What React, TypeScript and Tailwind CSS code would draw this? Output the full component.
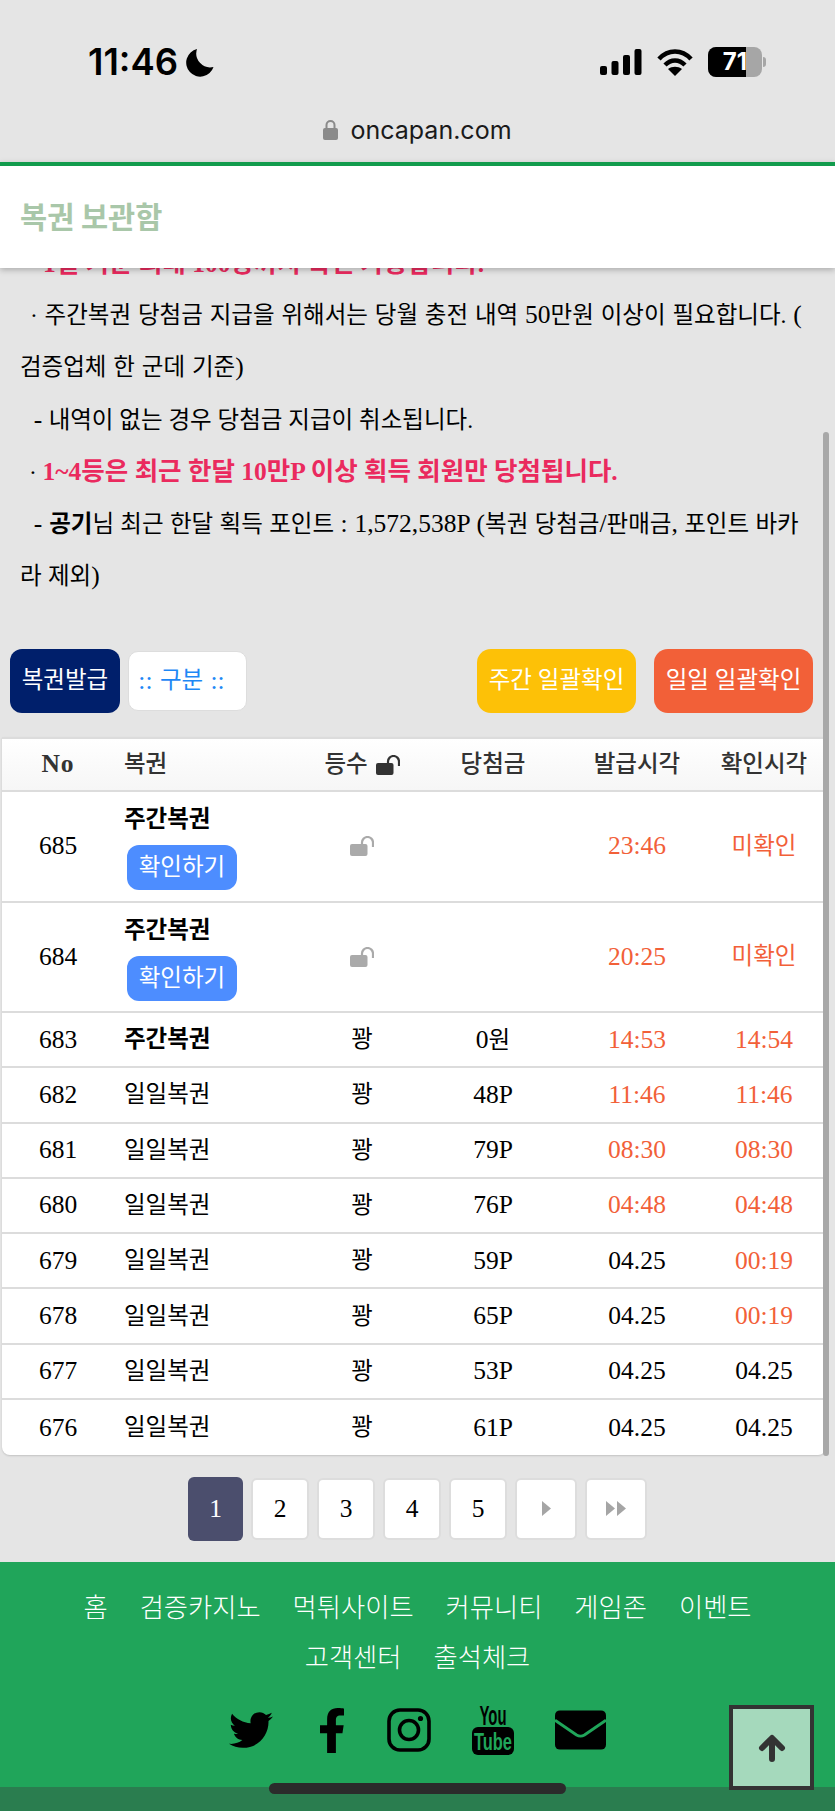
import React from "react";
import { FaTwitter, FaFacebookF } from "react-icons/fa";

const serif = "font-['Liberation_Serif','Noto_Sans_CJK_KR',serif]";

const rows = [
  { no: "685", name: "주간복권", bold: true, btn: true, rank: null, prize: "", issue: "23:46", check: "미확인", issueRed: true, checkRed: true },
  { no: "684", name: "주간복권", bold: true, btn: true, rank: null, prize: "", issue: "20:25", check: "미확인", issueRed: true, checkRed: true },
  { no: "683", name: "주간복권", bold: true, btn: false, rank: "꽝", prize: "0원", issue: "14:53", check: "14:54", issueRed: true, checkRed: true },
  { no: "682", name: "일일복권", bold: false, btn: false, rank: "꽝", prize: "48P", issue: "11:46", check: "11:46", issueRed: true, checkRed: true },
  { no: "681", name: "일일복권", bold: false, btn: false, rank: "꽝", prize: "79P", issue: "08:30", check: "08:30", issueRed: true, checkRed: true },
  { no: "680", name: "일일복권", bold: false, btn: false, rank: "꽝", prize: "76P", issue: "04:48", check: "04:48", issueRed: true, checkRed: true },
  { no: "679", name: "일일복권", bold: false, btn: false, rank: "꽝", prize: "59P", issue: "04.25", check: "00:19", issueRed: false, checkRed: true },
  { no: "678", name: "일일복권", bold: false, btn: false, rank: "꽝", prize: "65P", issue: "04.25", check: "00:19", issueRed: false, checkRed: true },
  { no: "677", name: "일일복권", bold: false, btn: false, rank: "꽝", prize: "53P", issue: "04.25", check: "04.25", issueRed: false, checkRed: false },
  { no: "676", name: "일일복권", bold: false, btn: false, rank: "꽝", prize: "61P", issue: "04.25", check: "04.25", issueRed: false, checkRed: false },
];

const cols = "grid grid-cols-[112px_186px_124px_138px_150px_104px] items-center";

function L({ children }: { children: React.ReactNode }) {
  return <span className="text-[25.5px]">{children}</span>;
}

function Unlock({ className }: { className: string }) {
  return (
    <svg viewBox="0 0 24 20" className={className} fill="currentColor">
      <rect x="0" y="8" width="17.5" height="12" rx="2" />
      <path d="M12 9 V6.5 A5.5 5.5 0 0 1 23 6.5 V11" fill="none" stroke="currentColor" strokeWidth="2.2" />
    </svg>
  );
}

function Tri({ x = 0 }: { x?: number }) {
  return <polygon points={`${x},0 ${x + 9},7.5 ${x},15`} fill="#a5a5a5" />;
}

export default function App() {
  return (
    <div className={`relative w-[835px] h-[1811px] overflow-hidden bg-[#e5e5e5] text-[23.5px] text-black ${serif}`}>
      {/* status bar */}
      <div className="h-[162px] relative font-['Inter','Liberation_Sans',sans-serif]">
        <div className="flex justify-between pl-[88px] pr-[69px] pt-[44px] h-[100px] items-start">
          <div className="flex items-center gap-[8px] text-[36.5px] leading-[36px] font-semibold">
            11:46
            <svg viewBox="0 0 28 29" className="w-[28px] h-[29px] mt-[1px]" fill="black">
              <path d="M11 1 A14 14 0 1 0 27.5 19 A14 14 0 0 1 11 1 Z" />
            </svg>
          </div>
          <div className="flex items-center gap-[15px] h-[36px]">
            <svg width="42" height="26" viewBox="0 0 42 26" fill="black">
              <rect x="0" y="17" width="7" height="9" rx="2" />
              <rect x="11.5" y="12" width="7" height="14" rx="2" />
              <rect x="23" y="6" width="7" height="20" rx="2" />
              <rect x="34.5" y="0" width="7" height="26" rx="2" />
            </svg>
            <svg width="36" height="27" viewBox="0 0 36 27" fill="none" stroke="black" strokeWidth="4.5">
              <path d="M2 10 C 11 0, 25 0, 34 10" />
              <path d="M8 16 C 14 10, 22 10, 28 16" />
              <path d="M18 27 L11 20 C 15 17, 21 17, 25 20 Z" fill="black" stroke="none" />
            </svg>
            <div className="flex items-center">
              <div className="relative w-[54px] h-[30px] rounded-[8px] overflow-hidden bg-[#a6a6a6] flex">
                <div className="w-[38px] h-full bg-black" />
                <span className="absolute inset-0 flex items-center justify-center text-white text-[24px] font-bold">71</span>
              </div>
              <div className="w-[3px] h-[10px] ml-[1px] rounded-r bg-[#a6a6a6]" />
            </div>
          </div>
        </div>
        <div className="flex items-center justify-center gap-[12px] text-[25px] leading-[32px] text-[#1a1a1a] mt-[14px]">
          <svg viewBox="0 0 15 20" className="w-[15px] h-[20px]" fill="#8a8a8a">
            <rect x="0" y="8" width="15" height="12" rx="2" />
            <path d="M3.5 9 V5 A4 4 0 0 1 11.5 5 V9" fill="none" stroke="#8a8a8a" strokeWidth="2" />
          </svg>
          oncapan.com
        </div>
      </div>
      {/* header */}
      <div className="relative z-10 h-[106px] border-t-4 border-[#119b4c] bg-white shadow-[0_2px_6px_rgba(0,0,0,0.25)] flex items-center pl-[20px] pb-[4px] font-['Noto_Sans_CJK_KR',sans-serif] text-[29.5px] font-bold text-[#a9c7a9]">
        복권 보관함
      </div>
      {/* notice */}
      <div className="h-[369px] overflow-hidden relative">
        <div className="-mt-[30px] px-[20px] leading-[51.2px] break-all">
          <div className="font-bold text-[25.5px] text-[#ea2a5e] pl-[23px]">1일 기준 최대 100장까지 확인 가능합니다.</div>
          <div className="indent-[3px] [word-spacing:1px]">&nbsp;· 주간복권 당첨금 지급을 위해서는 당월 충전 내역 <L>50</L>만원 이상이 필요합니다. <L>(</L> 검증업체 한 군데 기준<L>)</L></div>
          <div className="indent-[1px]"><L>&nbsp; - </L>내역이 없는 경우 당첨금 지급이 취소됩니다.</div>
          <div className="indent-[3px]">&nbsp;· <span className="font-bold text-[25.5px] text-[#ea2a5e]">1~4등은 최근 한달 10만P 이상 획득 회원만 당첨됩니다.</span></div>
          <div className="[word-spacing:0.5px]"><L>&nbsp; - </L><b>공기</b>님 최근 한달 획득 포인트 <L>: 1,572,538P (</L>복권 당첨금<L>/</L>판매금<L>,</L> 포인트 바카라 제외<L>)</L></div>
        </div>
      </div>
      {/* buttons */}
      <div className="h-[88px] pl-[10px] pr-[22px] flex items-center justify-between">
        <div className="flex items-center gap-[8px]">
          <div className="w-[110px] h-[64px] rounded-[12px] bg-[#001f6b] text-white flex items-center justify-center">복권발급</div>
          <div className="w-[119px] h-[60px] pr-[12px] rounded-[10px] bg-white border border-[#ddd] text-[#1e88f5] flex items-center justify-center whitespace-pre [word-spacing:1px]"><L>:: </L>구분<L> ::</L></div>
        </div>
        <div className="flex items-center gap-[18px]">
          <div className="w-[159px] h-[64px] rounded-[14px] bg-[#fdc107] text-white flex items-center justify-center">주간 일괄확인</div>
          <div className="w-[159px] h-[64px] rounded-[14px] bg-[#f26038] text-white flex items-center justify-center">일일 일괄확인</div>
        </div>
      </div>
      {/* table */}
      <div className="mt-[12px] ml-[2px] w-[824px] rounded-b-[8px] bg-white overflow-hidden border-t-2 border-[#dcdcdc] shadow-[0_1px_2px_rgba(0,0,0,0.15)]">
        <div className={`${cols} h-[53px] bg-gradient-to-b from-white to-[#f6f6f6] border-b-2 border-[#dcdcdc] text-[#333] font-medium`}>
          <div className="text-center font-bold text-[25.5px] tracking-[1px]">No</div>
          <div className="pl-[10px]">복권</div>
          <div className="flex items-center justify-center gap-[8px]">등수 <Unlock className="w-[24px] h-[20px] text-[#333]" /></div>
          <div className="text-center">당첨금</div>
          <div className="text-center">발급시각</div>
          <div className="text-center">확인시각</div>
        </div>
        {rows.map((r) => (
          <div key={r.no} className={`${cols} ${r.btn ? "h-[110.5px]" : "h-[55.3px]"} border-b-2 border-[#dcdcdc] last:border-b-0`}>
            <div className="text-center text-[25.5px]">{r.no}</div>
            <div className="pl-[10px]">
              <div className={r.bold ? "font-bold" : ""}>{r.name}</div>
              {r.btn && <div className="mt-[8px] ml-[3px] w-[110px] h-[45px] rounded-[12px] bg-[#4d8dff] text-white flex items-center justify-center">확인하기</div>}
            </div>
            <div className="flex justify-center">{r.rank ?? <Unlock className="w-[24px] h-[20px] text-[#aaa]" />}</div>
            <div className="text-center text-[25.5px]">{r.prize === "0원" ? <>0<span className="text-[23.5px]">원</span></> : r.prize}</div>
            <div className={`text-center text-[25.5px] ${r.issueRed ? "text-[#f26038]" : ""}`}>{r.issue}</div>
            <div className={`text-center ${r.check === "미확인" ? "" : "text-[25.5px]"} ${r.checkRed ? "text-[#f26038]" : ""}`}>{r.check}</div>
          </div>
        ))}
      </div>
      {/* pagination */}
      <div className="flex items-center justify-center gap-[8px] h-[107px] text-[25.5px]">
        <div className="w-[55px] h-[64px] rounded-[6px] bg-[#4b4e6d] text-white flex items-center justify-center">1</div>
        {["2", "3", "4", "5"].map((p) => (
          <div key={p} className="w-[58px] h-[62px] rounded-[6px] bg-white border-2 border-[#ddd] flex items-center justify-center">{p}</div>
        ))}
        <div className="w-[62px] h-[62px] rounded-[6px] bg-white border-2 border-[#ddd] flex items-center justify-center">
          <svg width="9" height="15"><Tri /></svg>
        </div>
        <div className="w-[62px] h-[62px] rounded-[6px] bg-white border-2 border-[#ddd] flex items-center justify-center">
          <svg width="21" height="15"><Tri /><Tri x={11} /></svg>
        </div>
      </div>
      {/* footer */}
      <div className="h-[249px] bg-[#20a55a] text-white font-['Noto_Sans_CJK_KR',sans-serif] text-[26.3px] relative">
        <div className="pt-[19px] flex flex-wrap justify-center gap-x-[32px] px-[60px] leading-[50px] font-light">
          {["홈", "검증카지노", "먹튀사이트", "커뮤니티", "게임존", "이벤트", "고객센터", "출석체크"].map((t) => (
            <span key={t}>{t}</span>
          ))}
        </div>
        <div className="mt-[24px] h-[50px] flex items-center justify-center gap-[41px] text-black">
          <FaTwitter className="w-[44px] h-[44px] mr-[4px]" />
          <FaFacebookF className="w-[28px] h-[47px]" />
          <svg width="44" height="44" viewBox="0 0 44 44" fill="none" stroke="black" strokeWidth="3.6">
            <rect x="2" y="2" width="40" height="40" rx="11" />
            <circle cx="22" cy="22" r="9.5" />
            <circle cx="33.5" cy="10.5" r="2.6" fill="black" stroke="none" />
          </svg>
          <svg width="42" height="50" viewBox="0 0 42 50" className="overflow-visible">
            <text x="21" y="19.5" textAnchor="middle" textLength="27" lengthAdjust="spacingAndGlyphs" fontFamily="Liberation Sans" fontWeight="700" fontSize="27" fill="black">You</text>
            <rect x="0" y="22" width="42" height="28" rx="6" fill="black" />
            <text x="21" y="45" textAnchor="middle" textLength="38" lengthAdjust="spacingAndGlyphs" fontFamily="Liberation Sans" fontWeight="700" fontSize="24" fill="#20a55a">Tube</text>
          </svg>
          <svg width="51" height="40" viewBox="0 0 52 40">
            <rect width="52" height="40" rx="5" fill="black" />
            <path d="M0 10 L22 25 Q26 27.5 30 25 L52 10" fill="none" stroke="#20a55a" strokeWidth="3" />
          </svg>
        </div>
        <div className="absolute bottom-0 left-0 right-0 h-[24px] bg-[#2a7d4f]" />
      </div>
      {/* overlays */}
      <div className="absolute left-[823px] top-[432px] w-[6px] h-[1024px] rounded-full bg-[#a8a8a8]" />
      <div className="absolute left-[729px] top-[1705px] w-[85px] h-[85px] border-4 border-[#333] bg-[#a5d9bc] flex items-center justify-center">
        <svg width="28" height="28" viewBox="0 0 28 28" fill="none" stroke="#333" strokeWidth="6" strokeLinecap="round" strokeLinejoin="round">
          <path d="M14 25 V5 M4 14 L14 4 L24 14" />
        </svg>
      </div>
      <div className="absolute left-[269px] top-[1783px] w-[297px] h-[11px] rounded-full bg-[#2b2b2b]" />
    </div>
  );
}
